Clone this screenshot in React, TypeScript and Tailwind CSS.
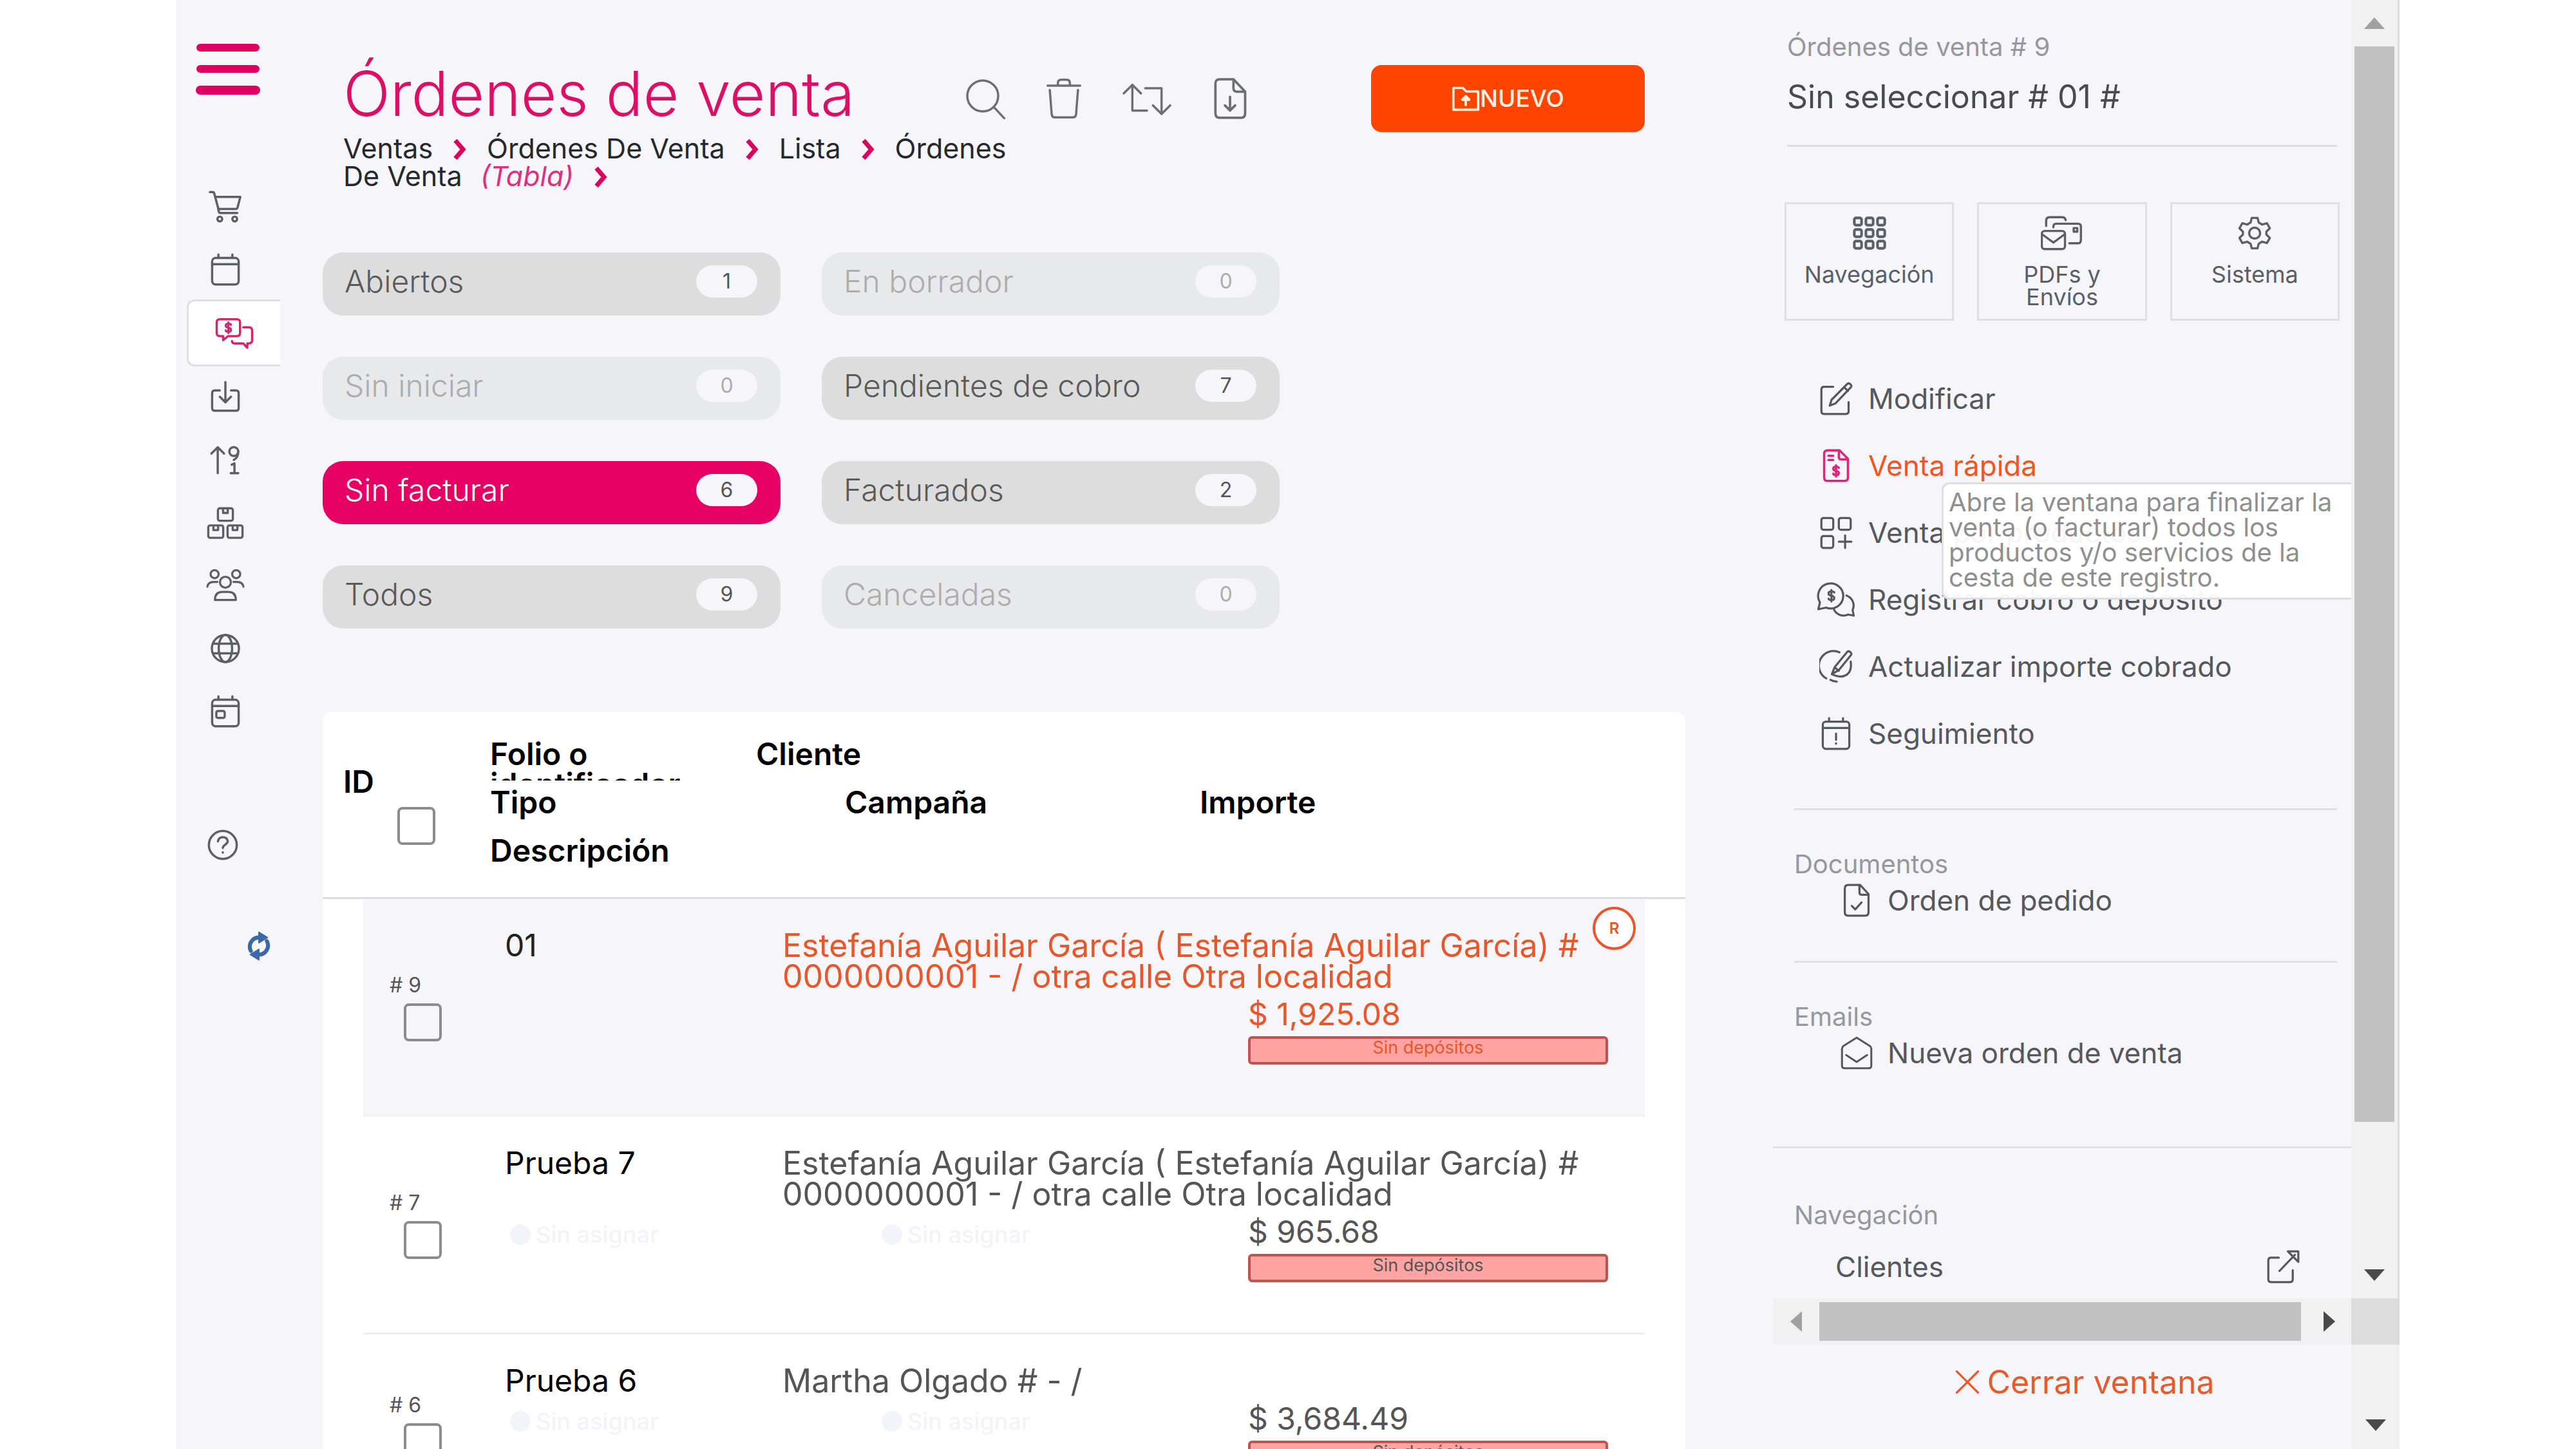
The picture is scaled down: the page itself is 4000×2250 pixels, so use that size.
import type { ReactNode } from 'react'
import clsx from 'clsx'

interface IconProps {
  className?: string
  strokeWidth?: number
  children: ReactNode
}

interface Filter {
  label: string
  count: number
  active?: boolean
}

interface Order {
  id: number
  folio: string
  client: string
  amount: string
  selected?: boolean
}

function Icon({ className, strokeWidth = 1.6, children }: IconProps) {
  return (
    <svg
      className={className ?? 'size-[52px]'}
      viewBox="0 0 24 24"
      fill="none"
      stroke="currentColor"
      strokeWidth={strokeWidth}
      strokeLinecap="round"
      strokeLinejoin="round"
      aria-hidden="true"
    >
      {children}
    </svg>
  )
}

const dollar = 'M12 2v20M17 6.5C16.5 5 15 4.5 12 4.5c-3 0-5 1.200-5 3.700 0 5.300 10 2.300 10 7.600 0 2.500-2 3.700-5 3.700s-4.600-.8-5-2.500'

const navItems = [
  {
    label: 'Compras',
    icon: (
      <Icon>
        <path d="M.9 1.500h2q.9 0 1.100.9L4.700 5h18l-2 7.600q-.3 1-1.300 1H7.900q-1 0-1.200-1L4 2.400" />
        <path d="M6.800 13.500l.5 2q.2 1 1.200 1h12" />
        <circle cx="8" cy="20.800" r="1.700" />
        <circle cx="18.700" cy="20.800" r="1.700" />
      </Icon>
    )
  },
  {
    label: 'Calendario',
    icon: (
      <Icon>
        <rect x="2.500" y="3.500" width="19" height="19" rx="2.500" />
        <path d="M2.500 8h19M7 1v2.500M17 1v2.500" />
      </Icon>
    )
  },
  {
    label: 'Ventas',
    active: true,
    icon: (
      <Icon className="size-[60px]" strokeWidth={1.4}>
        <path d="M3 3.500h10.500q2 0 2 2V12q0 2-2 2H8l-3 2.500V14H3q-2 0-2-2V5.500q0-2 2-2z" />
        <path d="M17.500 8.500H21q2 0 2 2v6q0 2-2 2h-1v2.700l-2.500-2.700H12.500q-2 0-2-1.500" />
        <g transform="translate(4.300 4.800) scale(.33)" strokeWidth="4">
          <path d={dollar} />
        </g>
      </Icon>
    )
  },
  {
    label: 'Descargas',
    icon: (
      <Icon>
        <path d="M8 8H4.500q-2 0-2 2v10.500q0 2 2 2h15q2 0 2-2V10q0-2-2-2H16" />
        <path d="M12 2v14M8 12.500l4 4 4-4" />
      </Icon>
    )
  },
  {
    label: 'Ordenar',
    icon: (
      <Icon>
        <path d="M6.500 22V4M2 8l4.500-4.500L11 8" />
        <circle cx="18" cy="6.500" r="3.200" />
        <path d="M21.200 6.500q0 4.500-3.200 6M16.500 16l2-1v6.500M15.800 22h5.400" />
      </Icon>
    )
  },
  {
    label: 'Inventario',
    icon: (
      <Icon className="size-[58px]" strokeWidth={1.4}>
        <rect x="7.200" y="3" width="9.600" height="8" rx="1.200" />
        <rect x="1" y="14" width="9.600" height="8" rx="1.200" />
        <rect x="13.400" y="14" width="9.600" height="8" rx="1.200" />
        <path d="M10.500 3.200V6h3V3.200M4.300 14.200V17h3v-2.800M16.700 14.200V17h3v-2.800" />
      </Icon>
    )
  },
  {
    label: 'Contactos',
    icon: (
      <Icon className="size-[60px]" strokeWidth={1.300}>
        <circle cx="5.300" cy="5" r="2.500" />
        <circle cx="18.700" cy="5" r="2.500" />
        <circle cx="12" cy="10" r="3.400" />
        <path d="M.8 12.800q.4-3 4-3H7M23.200 12.800q-.4-3-4-3H17" />
        <path d="M5.500 21q0-5 4.500-5h4q4.500 0 4.500 5z" />
      </Icon>
    )
  },
  {
    label: 'Web',
    icon: (
      <Icon>
        <circle cx="12" cy="12" r="9.700" />
        <ellipse cx="12" cy="12" rx="4.800" ry="9.700" />
        <path d="M3 8.500h18M3 15.500h18" />
      </Icon>
    )
  },
  {
    label: 'Agenda',
    icon: (
      <Icon>
        <rect x="2.500" y="3.500" width="19" height="19" rx="2.500" />
        <path d="M2.500 8h19M7 1v2.500M17 1v2.500" />
        <rect x="5.500" y="11.500" width="6" height="5" rx="1.200" />
      </Icon>
    )
  }
]

const toolbar = [
  {
    label: 'Buscar',
    icon: (
      <Icon className="size-[64px]" strokeWidth={1.300}>
        <circle cx="10.500" cy="10.500" r="9" />
        <path d="M17 17l6 6.500" />
      </Icon>
    )
  },
  {
    label: 'Eliminar',
    icon: (
      <Icon className="size-[64px]" strokeWidth={1.300}>
        <path d="M2.500 4.500h19M8.500 4.300V3q0-2 2-2h3q2 0 2 2v1.300" />
        <path d="M3.800 7l1.100 14.200q.2 1.800 2 1.800h10.200q1.800 0 2-1.800L20.200 7" />
      </Icon>
    )
  },
  {
    label: 'Actualizar',
    icon: (
      <Icon className="h-[64px] w-[78px]" strokeWidth={1.300}>
        <path d="M3.500 19V5.500M-1.500 9l5-5 5 5M3.500 19H12" />
        <path d="M11 6h9.500v13.500M15.500 16l5 5 5-5" />
      </Icon>
    )
  },
  {
    label: 'Exportar',
    icon: (
      <Icon className="size-[64px]" strokeWidth={1.400}>
        <path d="M6 .8h8L20.800 8v12.700q0 2.500-2.500 2.500H6q-2.500 0-2.500-2.500V3.300Q3.500.8 6 .8z" />
        <path d="M14 1v5q0 2 2 2h4.500M12 11v8M9 16l3 3 3-3" />
      </Icon>
    )
  }
]

const filters: Filter[] = [
  { label: 'Abiertos', count: 1 },
  { label: 'En borrador', count: 0 },
  { label: 'Sin iniciar', count: 0 },
  { label: 'Pendientes de cobro', count: 7 },
  { label: 'Sin facturar', count: 6, active: true },
  { label: 'Facturados', count: 2 },
  { label: 'Todos', count: 9 },
  { label: 'Canceladas', count: 0 }
]

const estefania = 'Estefanía Aguilar García ( Estefanía Aguilar García) # 0000000001 - / otra calle Otra localidad'

const orders: Order[] = [
  { id: 9, folio: '01', client: estefania, amount: '$ 1,925.08', selected: true },
  { id: 7, folio: 'Prueba 7', client: estefania, amount: '$ 965.68' },
  { id: 6, folio: 'Prueba 6', client: 'Martha Olgado # - /', amount: '$ 3,684.49' }
]

const sections = [
  {
    label: 'Navegación',
    icon: (
      <Icon className="size-[54px]" strokeWidth={1.800}>
        {[1.500, 9.500, 17.500].map((y) =>
          [1.500, 9.500, 17.500].map((x) => <rect key={`${x}-${y}`} x={x} y={y} width="5" height="5" rx="1.200" />)
        )}
      </Icon>
    )
  },
  {
    label: 'PDFs y Envíos',
    icon: (
      <Icon className="h-[54px] w-[66px]" strokeWidth={1.500}>
        <path d="M1 7V3.500Q1 1 3.500 1H12q2 0 2.500 2M6 8V7.500Q6 5.500 8 5.500h15q2 0 2 2v9q0 2.500-2 2.500h-6" />
        <rect x="20" y="8.500" width="2.500" height="2.500" />
        <rect x="-2" y="10.500" width="16" height="12.500" rx="2" />
        <path d="M-1.500 13L6 18.500 13.500 13" />
      </Icon>
    )
  },
  {
    label: 'Sistema',
    icon: (
      <Icon className="size-[54px]" strokeWidth={1.500}>
        <path d="M10 1.500h4l.8 3.200 2.400 1.400 3.300-.9 2 3.500-2.400 2.300v2l2.400 2.300-2 3.500-3.300-.9-2.400 1.400-.8 3.200h-4l-.8-3.200-2.400-1.400-3.300.9-2-3.500L3.900 13v-2L1.500 8.700l2-3.500 3.300.9 2.400-1.400z" />
        <circle cx="12" cy="12" r="3.800" />
      </Icon>
    )
  }
]

const actions = [
  {
    label: 'Modificar',
    icon: (
      <Icon strokeWidth={1.500}>
        <path d="M10 3.500H3.500q-2 0-2 2V21q0 2 2 2H19q2 0 2-2v-6.500" />
        <path d="M20 1.500q1-1 2.300.2t.2 2.300L11.500 15.500 7.500 17l1.300-4.200zM18 4l2.500 2.500" />
      </Icon>
    )
  },
  {
    label: 'Venta rápida',
    hover: true,
    icon: (
      <Icon strokeWidth={1.600}>
        <path d="M6 1h8.500L20.500 7v13.500q0 2.500-2.500 2.500H6q-2.500 0-2.500-2.500v-17Q3.500 1 6 1z" />
        <path d="M14 1.500V6q0 1.500 1.500 1.500h4.500M6.500 5h3.500M6.500 8h3.500" />
        <g transform="translate(7.200 11) scale(.4)" strokeWidth="4">
          <path d={dollar} />
        </g>
      </Icon>
    )
  },
  {
    label: 'Venta por productos',
    icon: (
      <Icon strokeWidth={1.500}>
        <rect x="1.500" y="1.500" width="8.500" height="8.500" rx="1.500" />
        <rect x="14" y="1.500" width="8.500" height="8.500" rx="1.500" />
        <rect x="1.500" y="14.500" width="8.500" height="8.500" rx="1.500" />
        <path d="M18.500 14v9M14 18.500h9" />
      </Icon>
    )
  },
  {
    label: 'Registrar cobro o depósito',
    icon: (
      <Icon className="-mx-1 size-[60px]" strokeWidth={1.300}>
        <path d="M1 18l1-4.200A7.800 7.800 0 1 1 5.800 17z" />
        <path d="M18.500 9.500a6.600 6.600 0 0 1 3.800 9l.7 3.500-3.500-.7a6.600 6.600 0 0 1-9-3.600" />
        <g transform="translate(4.800 5.300) scale(.36)" strokeWidth="3.500">
          <path d={dollar} />
        </g>
      </Icon>
    )
  },
  {
    label: 'Actualizar importe cobrado',
    icon: (
      <Icon strokeWidth={1.500}>
        <path d="M14.500 1.800A10.500 10.500 0 0 0 5 20.500M8 21.500q2 1.200 4.500 1.300" />
        <path d="M20 1.500q1-1 2.300.2t.2 2.300L14 14.500 9 17.500l2-5z" />
        <path d="M22.500 8.500q1 7-3 9.500-4.500 2.500-10-.3M11.500 13l2.500 2" />
      </Icon>
    )
  },
  {
    label: 'Seguimiento',
    icon: (
      <Icon strokeWidth={1.500}>
        <rect x="2.500" y="3.500" width="19" height="19.500" rx="2.200" />
        <path d="M2.500 8h19M7 1v2.500M17 1v2.500M12 12v4.500M12 19v.3" />
      </Icon>
    )
  }
]

function Chevron() {
  return (
    <svg className="mx-8 inline-block h-[34px] w-5 align-[-3px] text-[#dc005f]" viewBox="0 0 20 34" fill="none" stroke="currentColor" strokeWidth="7" aria-hidden="true">
      <path d="M3 3l12 14L3 31" />
    </svg>
  )
}

function Sidebar() {
  return (
    <nav className="flex w-[227px] shrink-0 flex-col pt-[60px]">
      <button aria-label="Menú" className="ml-7 w-[104px] text-[#e00061]">
        <svg className="h-[96px] w-full" viewBox="0 0 104 96" stroke="currentColor" strokeWidth="12" strokeLinecap="round">
          <path d="M9 14h86M9 47h86" />
          <path d="M9 80h86" strokeWidth="14" />
        </svg>
      </button>
      <ul className="mt-[116px] w-[161px] text-[#5c6066]">
        {navItems.map((item) => (
          <li key={item.label} className="flex h-[98px] items-center">
            <a
              href="#"
              aria-label={item.label}
              className={clsx(
                'flex items-center justify-center',
                item.active
                  ? 'ml-4 h-[104px] w-[145px] shrink-0 rounded-l-xl border-3 border-r-0 border-[#e0e0e4] bg-white text-[#d6246f]'
                  : 'w-[152px]'
              )}
            >
              {item.icon}
            </a>
          </li>
        ))}
      </ul>
      <a href="#" aria-label="Ayuda" className="mt-[132px] ml-[46px] self-start text-[#5c6066]">
        <Icon>
          <circle cx="12" cy="12" r="10" />
          <path d="M8.500 9.500q.5-3 3.500-3t3.500 2.700q0 1.500-2 2.800-1.500 1-1.500 2.200M12 17.300v.2" />
        </Icon>
      </a>
      <button aria-label="Recargar" className="mt-[108px] ml-[105px] self-start text-[#3b68a8]">
        <Icon className="size-[46px]" strokeWidth={3.200}>
          <path d="M5.500 16A7.500 7.500 0 0 1 12 5M18.500 8A7.500 7.500 0 0 1 12 19" />
          <path d="M12 .8v8.600l7-4.300zM12 14.600v8.600l-7-4.300z" fill="currentColor" strokeWidth="1" />
        </Icon>
      </button>
    </nav>
  )
}

function FilterPill({ label, count, active }: Filter) {
  return (
    <button
      className={clsx(
        'flex h-[98px] items-center justify-between rounded-[32px] pr-9 pb-2 pl-[34px]',
        active ? 'bg-[#e60064] text-white' : count > 0 ? 'bg-[#dddddd] text-[#5a5a5a]' : 'bg-[#e8e9eb] text-[#adadb0]'
      )}
    >
      <span className="text-[48px] leading-[56px] font-light">{label}</span>
      <span
        className={clsx(
          'flex h-[50px] w-[95px] items-center justify-center rounded-full bg-[#f5f5fa] text-[32px]',
          count > 0 ? 'text-[#555]' : 'text-[#adadb0]'
        )}
      >
        {count}
      </span>
    </button>
  )
}

function Unassigned() {
  return (
    <span className="flex items-center gap-2 text-[36px] font-medium text-[#f3f3f9]">
      <span className="size-8 rounded-full bg-[#f3f3fa]" />
      Sin asignar
    </span>
  )
}

const checkbox = 'block size-[59px] appearance-none rounded-lg border-4 border-[#8c8c8c]'

function OrdersTable() {
  return (
    <div className="mt-[129px] flex-1 rounded-t-2xl bg-white">
      <table className="w-full table-fixed">
        <colgroup>
          <col className="w-[63px]" />
          <col className="w-[197px]" />
          <col />
          <col className="w-[63px]" />
        </colgroup>
        <thead>
          <tr className="border-b-3 border-[#dcdcde] text-left text-[48px] leading-[47px] text-black">
            <th colSpan={2} className="pl-[32px] align-top font-semibold">
              <label htmlFor="all" className="mt-[85px] block">ID</label>
              <input id="all" type="checkbox" className={`${checkbox} mt-4 ml-[84px]`} />
            </th>
            <th colSpan={2} className="pt-[42px] pb-[31px] font-semibold">
              <div className="grid grid-cols-[repeat(3,551px)] gap-y-2.5">
                <div className="col-span-3 grid h-[65px] grid-cols-[413px_1fr] overflow-hidden">
                  <span>Folio o identificador</span>
                  <span>Cliente</span>
                </div>
                <span className="h-[65px]">Tipo</span>
                <span>Campaña</span>
                <span>Importe</span>
                <span className="h-[65px]">Descripción</span>
              </div>
            </th>
          </tr>
        </thead>
        <tbody>
          {orders.map((order) => (
            <tr key={order.id}>
              <td />
              <td className={clsx('border-b-3 border-[#f0f0f2] pl-[41px] align-middle', order.selected && 'bg-[#f5f5fa]')}>
                <label htmlFor={`order-${order.id}`} className="block text-[32px] leading-10 text-[#555]">
                  # {order.id}
                </label>
                <input id={`order-${order.id}`} type="checkbox" className={`${checkbox} mt-2 ml-[22px]`} />
              </td>
              <td
                className={clsx(
                  'relative border-b-3 border-[#f0f0f2] pt-12 pr-[57px] pb-[78px] pl-[23px] text-[48px] leading-12',
                  order.selected ? 'bg-[#f5f5fa] text-[#e8562a]' : 'text-[#555]'
                )}
              >
                {order.selected && (
                  <span className="absolute top-3 right-3.5 flex size-[67px] items-center justify-center rounded-full border-4 border-[#e8562a] bg-white text-[24px] font-semibold">
                    R
                  </span>
                )}
                <div className="grid grid-cols-[431px_1fr]">
                  <span className={order.selected ? 'text-[#222]' : 'text-black'}>{order.folio}</span>
                  <span className="text-[50px]">{order.client}</span>
                </div>
                <div className="mt-[11px] grid grid-cols-[577px_577px_1fr] items-start">
                  <div className="pt-1 pl-2">{!order.selected && <Unassigned />}</div>
                  <div className="pt-1 pl-2">{!order.selected && <Unassigned />}</div>
                  <div>
                    <span>{order.amount}</span>
                    <div className="mt-2.5 h-11 rounded-md border-4 border-[#bd5450] bg-[#ffa3a3] text-center text-[27px] leading-7">
                      Sin depósitos
                    </div>
                  </div>
                </div>
              </td>
              <td />
            </tr>
          ))}
        </tbody>
      </table>
    </div>
  )
}

function DetailPanel() {
  return (
    <div className="min-w-0 flex-1 pb-[21px] text-[44px] leading-14 text-[#55585c]">
      <div className="pr-[22px] pl-[22px]">
        <p className="pt-[49px] text-[40px] leading-12 text-[#97989c]">Órdenes de venta # 9</p>
        <h2 className="mt-[25px] text-[50px] text-[#484b4f]">Sin seleccionar # 01 #</h2>
        <hr className="mt-[47px] border-t-3 border-[#dcdee3]" />
      </div>
      <div className="mt-[86px] grid grid-cols-3 gap-9 pr-[18px] pl-[18px]">
        {sections.map((section) => (
          <button
            key={section.label}
            className="flex h-[184px] flex-col items-center gap-5 border-3 border-[#dde0e4] px-6 pt-[18px] text-[36px] leading-[35px] text-[#5c6066]"
          >
            {section.icon}
            <span className={section.label.includes(' ') ? 'px-8' : ''}>{section.label}</span>
          </button>
        ))}
      </div>
      <ul className="mt-[69px] pl-[72px]">
        {actions.map((action) => (
          <li key={action.label} className="relative">
            <a href="#" className={clsx('flex h-[104px] items-center gap-6 whitespace-nowrap', action.hover && 'text-[#f2551f]')}>
              <span className={clsx('flex w-[52px] shrink-0 justify-center', action.hover && 'text-[#e0247a]')}>{action.icon}</span>
              {action.label}
            </a>
            {action.hover && (
              <div role="tooltip" className="absolute top-[78px] right-0 left-[190px] z-10 rounded-l-xl border-3 border-r-0 border-[#dcdee0] bg-white/95 px-2 pt-2 pb-3 text-[40px] leading-[39px] text-[#8f8f8f]">
                Abre la ventana para finalizar la venta (o facturar) todos los productos y/o servicios de la cesta de este registro.
              </div>
            )}
          </li>
        ))}
      </ul>
      <div className="pr-[22px] pl-[33px]">
        <hr className="mt-[64px] border-t-3 border-[#e0e0e5]" />
        <h3 className="mt-[60px] text-[40px] leading-12 text-[#97989c]">Documentos</h3>
        <a href="#" className="mt-1 flex items-center gap-[22px] pl-[71px]">
          <Icon strokeWidth={1.500}>
            <path d="M6 1h8.500L20.500 7.500v13q0 2.500-2.500 2.500H6q-2.500 0-2.500-2.500v-17Q3.500 1 6 1z" />
            <path d="M14 1.500v5q0 1.500 1.500 1.500h4.500M8.500 16l2.500 2.500 4.500-5" />
          </Icon>
          Orden de pedido
        </a>
        <hr className="mt-[66px] border-t-3 border-[#e0e0e5]" />
        <h3 className="mt-[60px] text-[40px] leading-12 text-[#97989c]">Emails</h3>
        <a href="#" className="mt-1 flex items-center gap-[22px] pl-[71px]">
          <Icon strokeWidth={1.400}>
            <path d="M12 1l9.500 6q1 .7 1 2v12.200q0 1.800-1.800 1.800H3.300q-1.800 0-1.800-1.800V9q0-1.300 1-2z" />
            <path d="M4.500 13.500l7.500 5 7.500-5" />
          </Icon>
          Nueva orden de venta
        </a>
      </div>
      <hr className="mt-[117px] border-t-3 border-[#e0e0e5]" />
      <div className="pr-20 pl-[33px]">
        <h3 className="mt-20 text-[40px] leading-12 text-[#97989c]">Navegación</h3>
        <a href="#" className="mt-7 flex items-center justify-between pl-16">
          Clientes
          <Icon strokeWidth={1.500}>
            <path d="M9 5.500H3.500q-2 0-2 2V21q0 2 2 2H17q2 0 2-2v-6.500" />
            <path d="M9.500 15L20.500 3.500M15.500 1H23v7.500z" />
          </Icon>
        </a>
      </div>
    </div>
  )
}

function Arrow({ d, className }: { d: string; className: string }) {
  return (
    <svg viewBox="0 0 34 34" fill="currentColor" className={`size-[34px] ${className}`} aria-hidden="true">
      <path d={d} />
    </svg>
  )
}

function RightPanel() {
  return (
    <aside className="flex w-[973px] shrink-0 flex-col">
      <div className="flex">
        <DetailPanel />
        <div className="flex w-[75px] shrink-0 flex-col items-center border-r-3 border-[#dcdcdc] bg-[#f1f1f1]">
          <div className="flex h-[72px] items-center">
            <Arrow d="M1 26L17 8l16 18z" className="text-[#a0a0a0]" />
          </div>
          <div className="w-[62px] flex-[33] bg-[#c1c1c1]" />
          <div className="flex-[4]" />
          <div className="flex h-[72px] items-center">
            <Arrow d="M1 8l16 18L33 8z" className="text-[#4a4a4a]" />
          </div>
        </div>
      </div>
      <div className="flex h-[72px]">
        <div className="flex flex-1 items-center bg-[#f1f1f1]">
          <div className="flex w-[72px] justify-center">
            <Arrow d="M26 1L8 17l18 16z" className="text-[#a0a0a0]" />
          </div>
          <div className="h-[60px] flex-1 bg-[#c1c1c1]" />
          <div className="flex w-[78px] justify-center pl-2.5">
            <Arrow d="M8 1l18 16L8 33z" className="text-[#4a4a4a]" />
          </div>
        </div>
        <div className="w-[75px] bg-[#dcdcdc]" />
      </div>
      <div className="flex flex-1">
        <div className="flex flex-1 justify-center pt-[30px] pl-[72px]">
          <button className="flex items-center gap-3 self-start text-[50px] leading-14 text-[#e65a2c]">
            <Icon className="size-9" strokeWidth={2.200}>
              <path d="M1 1l22 22M23 1L1 23" />
            </Icon>
            Cerrar ventana
          </button>
        </div>
        <div className="flex w-[75px] items-end justify-center bg-[#f1f1f1] pb-[20px]">
          <Arrow d="M1 8l16 18L33 8z" className="text-[#4a4a4a]" />
        </div>
      </div>
    </aside>
  )
}

export default function App() {
  return (
    <div className="h-screen overflow-hidden bg-white px-[274px] font-['Inter',sans-serif]">
      <div className="flex h-full bg-[#f5f5fa]">
        <Sidebar />
        <main className="flex min-w-0 flex-1 flex-col pt-[101px] pr-[136px]">
          <header className="pr-[63px] pl-[32px]">
            <div className="flex items-start">
              <h1 className="w-[965px] text-[96px] leading-[88px] font-light whitespace-nowrap text-[#dc0f66]">Órdenes de venta</h1>
              <div className="flex gap-[58px] self-center text-[#6c7075]">
                {toolbar.map((tool) => (
                  <button key={tool.label} aria-label={tool.label}>
                    {tool.icon}
                  </button>
                ))}
              </div>
              <button className="ml-auto flex h-[104px] w-[425px] items-center justify-center rounded-2xl bg-[#ff4400] text-[37px] font-medium text-[#fff0e0]">
                <Icon className="size-[44px]" strokeWidth={2}>
                  <path d="M1.500 3h8l3 3h10v15.500h-21z" />
                  <path d="M12 17.500v-6M9 13l3-3 3 3z" fill="currentColor" />
                </Icon>
                NUEVO
              </button>
            </div>
            <nav className="mt-1 max-w-[1060px] text-[43px] leading-[43px] text-[#25282c]">
              Ventas
              <Chevron />
              Órdenes De Venta
              <Chevron />
              Lista
              <Chevron />
              Órdenes De Venta <i className="ml-4 text-[#dc3080]">(Tabla)</i>
              <Chevron />
            </nav>
          </header>
          <div className="mt-[97px] grid grid-cols-[repeat(2,711px)] gap-x-16 gap-y-16">
            {filters.map((filter) => (
              <FilterPill key={filter.label} {...filter} />
            ))}
          </div>
          <OrdersTable />
        </main>
        <RightPanel />
      </div>
    </div>
  )
}
